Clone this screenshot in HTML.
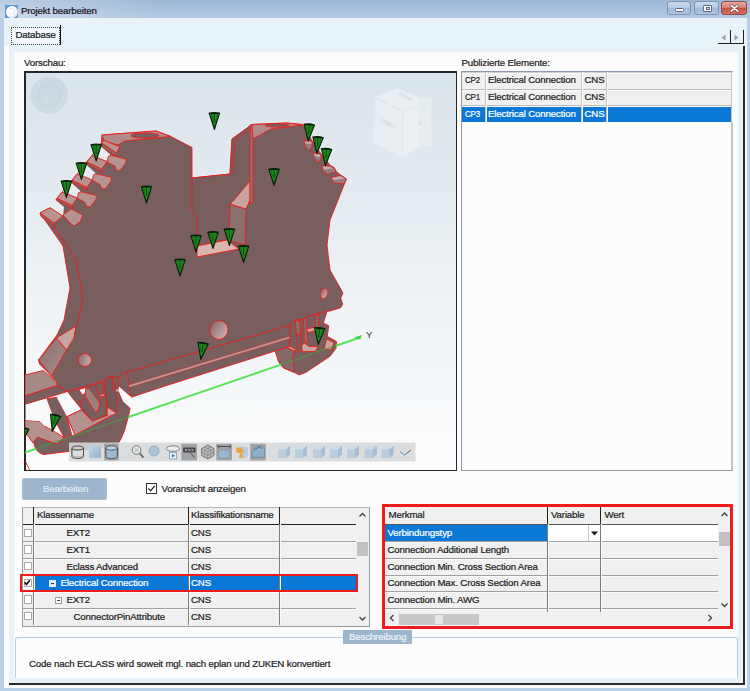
<!DOCTYPE html>
<html lang="de">
<head>
<meta charset="utf-8">
<title>Projekt bearbeiten</title>
<style>
*{box-sizing:border-box;margin:0;padding:0}
html,body{width:750px;height:691px;overflow:hidden;background:#bfd4ea}
body{font-family:"Liberation Sans",sans-serif;font-size:9.7px;letter-spacing:-0.16px;color:#1c1c1c;position:relative;-webkit-text-stroke:0.22px currentColor}
.a{position:absolute}
.t{position:absolute;white-space:nowrap;line-height:12px;height:12px}
#frame{left:0;top:0;width:750px;height:691px;background:linear-gradient(180deg,#9cb6d5 0,#b3c9e3 18px,#bad0e9 19px,#bad0e9 100%)}
#tl{left:0;top:0;width:170px;height:18px;background:linear-gradient(90deg,rgba(255,255,255,.3) 0,rgba(255,255,255,.22) 60px,rgba(255,255,255,0) 170px)}
#client{left:4px;top:18px;width:743px;height:670.3px;background:#e8f2f9}
#cw{left:4px;top:46px;width:743px;height:642.3px;background:#fcfcfc}
#tp{left:9px;top:46px;width:735px;height:637.5px;background:#e7f1f8}
#panel{left:14px;top:52px;width:724px;height:626px;background:#fcfcfc}
.wb{position:absolute;top:1px;height:14px;border:1px solid #7d93b0;border-radius:3px;background:linear-gradient(180deg,#cbd9eb 0,#b9cce4 45%,#9fb9d8 50%,#b0c6e0 100%)}
.grid{position:absolute;background:#f0f0f0}
.hl{position:absolute;height:1px;background:#a0a0a0;box-shadow:0 1px 0 #fbfbfb}
.vl{position:absolute;width:1px;background:#7d7d7d;box-shadow:1px 0 0 #fbfbfb}
.cb{position:absolute;width:8.4px;height:8.4px;border:1px solid #a9a9a9;background:#fff}
</style>
</head>
<body>
<div id="frame" class="a"></div>
<div id="tl" class="a"></div>
<div id="client" class="a"></div>
<div id="cw" class="a"></div>
<div id="tp" class="a"></div>
<div id="panel" class="a"></div>
<div class="a" style="left:5px;top:5px;width:13px;height:13px;background:#5e9bd3"></div>
<div class="a" style="left:5.5px;top:5.5px;width:12px;height:12px;border-radius:50%;background:#fdfeff;box-shadow:inset -1px -1px 1px #c9d9ea"></div>
<div class="a" style="left:8px;top:8px;width:7px;height:7px;border-radius:50%;border:1px solid #dfe8f2;border-left-color:transparent"></div>
<span class="t" style="left:21px;top:5.3px;color:#15151d">Projekt bearbeiten</span>
<div class="wb" style="left:667px;width:24px"><div class="a" style="left:7px;top:6px;width:9px;height:4px;border:1px solid #5a6a85;border-radius:1.5px;background:#fff"></div></div>
<div class="wb" style="left:694px;width:25px"><div class="a" style="left:8px;top:2.5px;width:9px;height:7px;border:1px solid #5a6a85;border-radius:1px;background:#fff"></div><div class="a" style="left:10.5px;top:4.5px;width:4px;height:3px;border:1px solid #5a6a85;background:#c8d6e8"></div></div>
<div class="wb" style="left:721px;width:26px;border-color:#8a4a4a;background:linear-gradient(180deg,#e6a9a0 0,#d98377 45%,#c5503f 50%,#d2705f 100%)"><svg class="a" style="left:8px;top:2px" width="9" height="8.5" viewBox="0 0 11 10"><path d="M1.5 1.5 L9.5 8.5 M9.5 1.5 L1.5 8.5" stroke="#6b3a3a" stroke-width="3.4" stroke-linecap="round"/><path d="M1.5 1.5 L9.5 8.5 M9.5 1.5 L1.5 8.5" stroke="#fff" stroke-width="2" stroke-linecap="round"/></svg></div>

<div class="a" style="left:11px;top:27px;width:49px;height:18px;background:#f3f8fc;border:1px dotted #444"></div>
<div class="a" style="left:60px;top:25px;width:1px;height:20px;background:#111"></div>
<span class="t" style="left:15.5px;top:29.1px">Database</span>
<div class="a" style="left:9px;top:683.4px;width:736px;height:1.5px;background:#2a2a2a"></div>
<div class="a" style="left:743.4px;top:46px;width:1.4px;height:638.5px;background:#2a2a2a"></div>
<div class="a" style="left:718px;top:30px;width:13px;height:14px;border-right:1px solid #222;border-bottom:1px solid #222"></div>
<div class="a" style="left:731px;top:30px;width:13px;height:14px;border-right:1px solid #222;border-bottom:1px solid #222"></div>
<svg class="a" style="left:718px;top:30px" width="26" height="14" viewBox="0 0 26 14"><path d="M7.5 4.5 L7.5 10.5 L3.5 7.5Z M16.5 4.5 L16.5 10.5 L20.5 7.5Z" fill="#a0a0a0"/></svg>

<span class="t" style="left:24px;top:57.1px">Vorschau:</span>
<div class="a" style="left:24px;top:71px;width:433.4px;height:400px;border-style:solid;border-color:#262626;border-width:2px 1.4px 1.4px 2px;background:linear-gradient(180deg,#dae4eb 0,#e3ebf0 30%,#f0f4f7 60%,#fbfcfd 100%)"></div>
<svg class="a" style="left:25px;top:72px" width="432" height="398" viewBox="25 72 432 398">
<defs>
<linearGradient id="gs" x1="0" y1="0" x2="1" y2="1"><stop offset="0" stop-color="#8a716e"/><stop offset="1" stop-color="#a88c88"/></linearGradient>
<linearGradient id="gh" x1="0" y1="0" x2="1" y2="0.3"><stop offset="0" stop-color="#86696a"/><stop offset="1" stop-color="#c6a7a3"/></linearGradient>
<g id="cone"><path d="M-5.9 -0.2 Q0 -1.8 5.9 -0.2 L0.4 17 L-0.4 17Z" fill="#071c07"/><path d="M-4.4 1 L4.4 1 L0 14Z" fill="#1f8f1f"/><path d="M-4.4 1 L-2.2 1 L0 14Z M4.4 1 L2.6 1 L0 14Z" fill="#167016"/><path d="M0 1 L0 9.5" stroke="#0b3a0b" stroke-width=".9"/></g>
</defs>
<!-- nav circle -->
<circle cx="49.3" cy="95.2" r="18.6" fill="#cdd7df" opacity=".85"/>
<circle cx="49.3" cy="95.2" r="11" fill="none" stroke="#c6d0d9" stroke-width="1.5" opacity=".6"/>
<!-- view cube -->
<g opacity=".6">
<path d="M419.2 97.2 L431.5 97.2 L431.5 145.2 L419.2 147.1Z" fill="#ecf0f2"/>
<path d="M374.8 96.5 L398 88.8 L419.2 97 L419.2 106.5 L403.2 111.4Z" fill="#f1f4f5"/>
<path d="M374.8 97.2 L403.2 111.4 L402.5 156.9 L373.6 142.8Z" fill="#eff2f4"/>
<path d="M403.2 111.4 L419.2 106.5 L419.2 147.1 L402.5 156.9Z" fill="#f4f6f7"/>
<path d="M403.2 111.4 L402.5 156.9 M375.5 97.5 L403.2 111.4 L419 106.5" fill="none" stroke="#cfd6db" stroke-width=".6" stroke-dasharray="2 1"/>
<text x="379" y="121" font-size="6.5" fill="#c3cad0" font-family="Liberation Sans, sans-serif" transform="rotate(27 379 121)">Unten</text>
<text x="398" y="95" font-size="5.5" fill="#c3cad0" font-family="Liberation Sans, sans-serif" transform="rotate(27 398 95)">Hinten</text>
<text x="418" y="125" font-size="6" fill="#c3cad0" font-family="Liberation Sans, sans-serif">9</text>
</g>
<g stroke="#ec1c1c" stroke-width=".9" stroke-linejoin="round">
<!-- lower-left arm -->
<path d="M25 375 L43 370.5 L57 382 L57.5 385.5 L25 396Z" fill="#a58985"/>
<path d="M25 396 L57.5 385.5 L67.5 391.5 L25 404.5Z" fill="#785f5d"/>
<!-- post 0 -->
<path d="M46.7 398.7 L56.7 397.3 L66.7 416 L72 436 L64 437.3 L53.3 417.3Z" fill="#785f5d"/>
<!-- foot top face -->
<path d="M25 420 L40 421.5 L44.5 426 L54.5 431.5 L64 437.5 L57 444 L37.5 437.5 L33 443 L25 432Z" fill="#b5918d"/>
<!-- foot front -->
<path d="M37.5 437.5 Q32 441 35 447 Q38 454 44 454.5 L117 445.5 L121 438.9 L124.2 431.4 L128.5 416.4 L130.1 407.8 L123.2 401.4 L118.4 390.7 L118.4 376.8 L112.5 376.8 L111.4 375.7 L107.1 377.3 L102.8 381.6 L67.5 391.5 L81.4 410 L67 416.4 L75 435.1 L64 437.5 L57 444Z" fill="#785f5d"/>
<!-- inner pink floor -->
<path d="M67 416.4 L81.4 410 L92.1 420.7 L107.6 415.3 L107.6 407.3 L116.2 413.2 L75 435.1Z" fill="#b5918d"/>
<path d="M107.6 415.3 L107.6 407.3 L116.2 413.2Z" fill="#cfaaa6" stroke="none"/>
<!-- post 1 / gap b -->
<path d="M78.7 389.6 L85.7 387.5 L86.8 392.3 L82.5 395Z" fill="#f7f9fa"/>
<!-- right wall -->
<path d="M103.9 382.1 L107.1 377.3 L111.4 375.7 L113 389.6 L116.7 391.8 L116.7 413.2 L107.6 407.3 L106 396Z" fill="#715a58"/>
<!-- U clip -->
<path d="M85.7 388.6 L88.9 388 L99.6 402.5 L99.1 410 L95.3 412.1 L85.2 396Z" fill="#9a807c"/>
<path d="M83.5 397.5 L85.7 396.3 L96 411.5 L94 412.5Z" fill="#c8a4a0" stroke="none"/>
<path d="M98.5 395 L103.9 393.4 L106 396 L100.2 397.1Z" fill="#b5918d"/>
<path d="M79.8 405.1 L85.2 396 L95.3 412.1 L99.1 410 L100.2 397.1 L106 396 L107.1 414.8 L92.1 421.2Z" fill="#785f5d"/>
<path d="M95.3 384.3 L98.5 395 M102.3 382.1 L103.9 393.4 M77.5 402 L81 401" fill="none"/>
<!-- main body silhouette -->
<path d="M102 135 L156 131 L170 136 L192 147.5 L192 178 L230 174 L232 139 L252 124.5 L287 123 L302.7 124.4 L312.1 140.9 L321 154 L330.5 165.8 L334.2 167.7 L336.1 171.4 L340.8 175.2 L346.4 179 L338 200 L330 220 L327 245 L330 270 L343 293 L340.7 298 L342.7 304 L340.7 307.7 L330 311 L324.7 311.7 L306 317 L303.3 319.7 L295.3 320.3 L290 325 L290 346.3 L275.3 351 L250 359 L165 386 L131.7 397.1 L128.5 395 L118.9 386.4 L118.4 390.7 L115.7 389.6 L112.5 376.8 L111.4 375.7 L107.1 377.3 L102.8 381.6 L67.5 391.5 L57.5 385.5 L57 382 L51.5 376 L39.5 364 L38.5 360 L57 335 L64 320 L70 288 L63 246 L40 213 L50 207.6 L57 198.3 L62.2 191.9 L72 180.3 L77.2 173.9 L86.8 161.9 L92 155.5 L101.4 142.7Z" fill="#785f5d"/>
<!-- left side face -->
<path d="M56.5 338 L66.5 350 L51.5 376 L38.5 360Z" fill="url(#gs)"/>
<path d="M56.5 338 L76 326 L74 338 L66.5 350Z" fill="#c8a4a0"/>
<!-- front face left edge line -->
<path d="M54 226 L76 260 L83 298 L76 328 L74 338" fill="none"/>
<!-- top face of left block -->
<path d="M102 135 L156 131 L170 136.5 L125 141 L118 145 L104 141Z" fill="#b08b87"/>
<ellipse cx="145" cy="135.5" rx="14" ry="2.6" fill="#785f5d"/>
<!-- teeth -->
<path d="M101.4 142.7 L116.4 153 L117 157 L102 147Z" fill="#866b68"/>
<path d="M101.4 142.7 L104.2 140.3 L119.7 146.9 L116.4 153Z" fill="#b8928e"/>
<path d="M46 207 L55 199.5 L64 207 L63 216Z" fill="#e6ecf0" stroke="none"/>
<path d="M92.0 155.5 L101.4 146.7 L110.3 154.6 L107.0 161.5Z" fill="#e6ecf0" stroke="none"/>
<path d="M77.2 173.9 L86.6 165.1 L95.5 173.0 L92.2 179.9Z" fill="#e6ecf0" stroke="none"/>
<path d="M62.2 191.9 L71.6 183.1 L80.5 191.0 L77.2 197.9Z" fill="#e6ecf0" stroke="none"/>
<path d="M108.4 156.3 L111.2 155.4 L126.3 159.1 L125.8 162.9 L120.2 170.4 L116.4 170.4 L115.0 166.2 L107.0 161.9Z" fill="#b8928e"/>
<path d="M86.8 161.9 L101.8 169.0 L102.8 172.0 L87.6 164.6Z" fill="#866b68"/>
<path d="M86.8 161.9 L92.0 155.5 L107.0 161.5 L101.8 169.0Z" fill="#b8928e"/>
<path d="M93.6 174.7 L96.4 173.8 L111.5 177.5 L111.0 181.3 L105.4 188.8 L101.6 188.8 L100.2 184.6 L92.2 180.3Z" fill="#b8928e"/>
<path d="M72.0 180.3 L87.0 187.4 L88.0 190.4 L72.8 183.0Z" fill="#866b68"/>
<path d="M72.0 180.3 L77.2 173.9 L92.2 179.9 L87.0 187.4Z" fill="#b8928e"/>
<path d="M78.6 192.7 L81.4 191.8 L96.5 195.5 L96.0 199.3 L90.4 206.8 L86.6 206.8 L85.2 202.6 L77.2 198.3Z" fill="#b8928e"/>
<path d="M57.0 198.3 L72.0 205.4 L73.0 208.4 L57.8 201.0Z" fill="#866b68"/>
<path d="M57.0 198.3 L62.2 191.9 L77.2 197.9 L72.0 205.4Z" fill="#b8928e"/>
<path d="M63 215 L71 209 L83 215 L80 222 L74 226 L70 223Z" fill="#b8928e"/>
<path d="M40 213 L54 223 L54.5 226 L41 216.5Z" fill="#866b68"/>
<path d="M40 213 L50 207.6 L63 216 L54 223Z" fill="#b8928e"/>

<!-- slot inner -->
<path d="M232 139 L252 124.5 L253 142 L250 203 L241 203 L230 204 L229 240 L227 240 L197 246 L197 217 L192 212 L192 178 L230 174Z" fill="#785f5d"/>
<path d="M197 246 L227 240 L239 249 L197 257Z" fill="#dcb4b0"/>
<path d="M230 204 L246 209 L245 245 L229 240Z" fill="#8a706d"/>
<path d="M230 204 L234 200 L250 181 L250 200 L246 209Z" fill="#c8a4a0"/>
<path d="M250 125 L253 125 L253 203 L250 203Z" fill="#96716e"/>
<path d="M233 174 L235 140.6 L253 127.4" fill="none" stroke-width=".7"/>
<!-- right tower top face -->
<path d="M252 124.5 L287 123 L303 125 L271 129 L253 139Z" fill="#b08b87"/>
<ellipse cx="277" cy="125.3" rx="12" ry="1.8" fill="#785f5d"/>
<!-- right teeth -->
<path d="M303.6 140.4 L312.1 140.9 L312.1 147 L308.8 150.7 L305 146Z M313 152.6 L321 154 L321 159.2 L317.8 162.5 L314 157.8Z M321.5 165.3 L330.5 165.8 L334.2 167.7 L336.1 171.4 L327.6 174.7 L322.9 170.5Z M330.5 177.1 L340.8 175.2 L346.4 179 L344 184 L334 183Z" fill="#8f7d7b"/>
<path d="M304.5 141.5 L311.5 142 L311.3 144 L305.3 143.5Z M314 153.8 L320.3 155 L320.1 157 L314.6 156Z M322.5 166.5 L330 167 L333 168.5 L324 169.5Z M332 178 L340.5 176.3 L344 178.7 L334 180Z" fill="#c9aeab" stroke="none"/>
<!-- rail -->
<path d="M112.5 376.8 L118.4 376.8 L120 376.2 L122.1 373 L127.5 372 L250 337 L290 325 M127.5 372 L128.5 384.3 L131.7 397.1 M118.4 376.8 L118.4 390.7" fill="none"/>
<path d="M115.7 389.6 L120 389 L120.5 391.2 L116.2 391.8Z" fill="#c8a4a0" stroke="none"/>
<path d="M128.6 385 L291 335.8 L291 338.2 L129 387.6Z" fill="#b39c99" stroke-width=".5"/>
<!-- holes -->
<ellipse cx="84.7" cy="360" rx="6.6" ry="6.4" fill="url(#gh)"/>
<ellipse cx="219" cy="330" rx="9" ry="9.5" fill="url(#gh)" transform="rotate(20 219 330)"/>
<ellipse cx="324" cy="293.5" rx="3.6" ry="5.6" fill="url(#gh)" transform="rotate(20 324 293.5)"/>
<!-- right small foot -->
<path d="M275.3 351 L290 346.3 L290 325 L295.3 320.3 L303.3 319.7 L306 317 L324.7 311.7 L326.7 312.3 L323.3 323 L328.7 325.7 L327.3 336.3 L336.7 341.7 L336 348.3 L330 356.3 L306 372.3 L299.3 375 L294 372.3 L283.3 367.7 L278.7 361.7Z" fill="#785f5d"/>
<path d="M275.3 351 L287.5 347.5 L294 351 L292.7 357.7 L294 372.3 L283.3 367.7 L278.7 361.7Z" fill="#846a67"/>
<path d="M287.5 347.5 L290 346.3 L296 349.5 L294 351Z" fill="#c8a4a0"/>
<path d="M301.5 345.5 L304.5 343 L308.7 346.3 L318 346.5 L315.5 351.5 L302 351.7Z" fill="#c8a4a0"/>
<path d="M295.3 320.3 L299.5 321.5 L300.7 333.5 L296.5 335Z M303.3 319.7 L306 317 L308 343 L304.5 343Z M316 314.5 L319 313.5 L318 327 L315.5 328Z" fill="#8a706d"/>
<path d="M296.5 335 L300.7 333.5 L302 351.7 L298 352Z" fill="#785f5d"/>
<path d="M306.5 329 L315.5 327 L318 330 L308 332.5Z M324 349 L326.5 339 L334 342.5 L331 350Z" fill="#c8a4a0"/>
</g>
<!-- white gaps -->
<path d="M25.5 404.7 L46.5 398.7 L53.3 417.3 L44.7 426 L40 421.3 L25.5 420Z" fill="#f7f9fa"/>
<path d="M56.7 397.3 L67.3 392.7 L80.7 408.7 L66.7 416Z" fill="#f7f9fa"/>
<path d="M118.9 386.4 L128.5 395 L131.2 397.1 L130.1 407.8 L123.2 401.4 L118.6 390.7Z" fill="#f7f9fa"/>
<path d="M25.3 461.3 L30 470.7" stroke="#ec1c1c" stroke-width=".9" fill="none"/>
<!-- green axis -->
<path d="M25 452.5 L36 448.7 M128.5 417 L281 364.6 M336 345.7 L360 337.5" stroke="#5ae25a" stroke-width="2" fill="none"/>
<path d="M36 448.7 L128.5 417 M281 364.6 L336 345.7" stroke="#4c9a42" stroke-width="1.3" fill="none" opacity=".75"/>
<path d="M354 337.5 L362 335 L360 339.5Z" fill="#3fd03f"/>
<text x="366" y="338" font-size="9.5" fill="#333" style="-webkit-text-stroke:0" font-family="Liberation Sans, sans-serif">Y</text>
<!-- cones -->
<use href="#cone" x="96.2" y="144.5"/><use href="#cone" x="81.4" y="163"/><use href="#cone" x="66.4" y="181"/>
<use href="#cone" x="214.4" y="113"/><use href="#cone" x="274" y="169"/><use href="#cone" x="308.8" y="124.4" transform="rotate(4 308.8 132)"/><use href="#cone" x="317.5" y="137.1" transform="rotate(4 317.5 145)"/><use href="#cone" x="326" y="148.9" transform="rotate(4 326 157)"/>
<use href="#cone" x="146.5" y="186.5"/>
<use href="#cone" x="196" y="235.5"/><use href="#cone" x="213" y="232"/><use href="#cone" x="229.4" y="229"/><use href="#cone" x="243.6" y="246"/><use href="#cone" x="180" y="259.5"/>
<use href="#cone" x="202" y="343" transform="rotate(8 202 351)"/>
<use href="#cone" x="319" y="328" transform="rotate(5 319 336)"/>
<use href="#cone" x="54" y="415" transform="rotate(12 54 423)"/>
<use href="#cone" x="22.5" y="428" transform="rotate(10 22.5 436)"/>

</svg>
<svg class="a" style="left:69px;top:442px" width="347" height="20" viewBox="69 442 347 20">
<defs>
<linearGradient id="gb" x1="0" y1="0" x2="1" y2="1"><stop offset="0" stop-color="#c3d6e6"/><stop offset="1" stop-color="#92b2cd"/></linearGradient>
<g id="cube"><path d="M-6 -2.5 L-2 -6 L6 -6 L6 2.5 L2 6 L-6 6Z" fill="#b9cddd"/><path d="M-6 -2.5 L-2 -6 L6 -6 L2 -2.5Z" fill="#cfdde8"/><path d="M2 -2.5 L6 -6 L6 2.5 L2 6Z" fill="#a6bfd3"/></g>
</defs>
<rect x="69" y="442.5" width="346.5" height="19" fill="#d6d8d9" opacity=".88"/>
<rect x="104.2" y="443.8" width="14.6" height="16.6" fill="#a2a3a4"/>
<rect x="181.4" y="443.8" width="15.6" height="16.6" fill="#a2a3a4"/>
<rect x="216.3" y="443.8" width="15.6" height="16.6" fill="#a2a3a4"/>
<rect x="250.2" y="443.8" width="15.6" height="16.6" fill="#a2a3a4"/>
<!-- cylinder outline -->
<g fill="none" stroke="#4a4a4a" stroke-width="1"><ellipse cx="77.7" cy="448" rx="5.8" ry="2"/><path d="M71.9 448 L71.9 456.5 A5.8 2 0 0 0 83.5 456.5 L83.5 448"/><path d="M71.9 455 A5.8 2 0 0 0 83.5 455" stroke="#8a8a8a" stroke-width=".7"/></g>
<!-- blue square -->
<rect x="89" y="446" width="12" height="12" fill="url(#gb)"/>
<!-- filled cylinder -->
<path d="M105.8 448 L105.8 456.5 A5.8 2.2 0 0 0 117.4 456.5 L117.4 448Z" fill="#9fb9cf" stroke="#4a4a4a" stroke-width=".9"/><ellipse cx="111.6" cy="448" rx="5.8" ry="2.2" fill="#bcd0e0" stroke="#4a4a4a" stroke-width=".9"/>
<!-- magnifier -->
<circle cx="136.5" cy="450" r="4.3" fill="#e4e8ea" stroke="#777" stroke-width="1"/><path d="M139.8 453.3 L143.4 457.6" stroke="#666" stroke-width="1.8"/><path d="M134.5 448 L138.5 452 M138.5 448 L134.5 452" stroke="#999" stroke-width=".7"/>
<!-- circle -->
<rect x="153" y="449" width="9" height="8" fill="#d3dfe9"/><circle cx="154" cy="451" r="5" fill="#a9c3d9" stroke="#8aa6bf" stroke-width=".8"/>
<!-- rotate -->
<ellipse cx="173" cy="448.6" rx="6.6" ry="2.8" fill="#e9ecee" stroke="#666" stroke-width=".8"/><rect x="169.5" y="452.5" width="7" height="6.5" fill="#e9f0f6" stroke="#7f9cb8" stroke-width=".8"/><path d="M172 454 L175 455.8 L172 457.5Z" fill="#3b6ea5"/>
<!-- tag -->
<rect x="183" y="447.5" width="12.5" height="5" rx="1" fill="#4a4a4a"/><path d="M185 450 L193.5 450" stroke="#e8e8e8" stroke-width="1" stroke-dasharray="2 1.2"/><path d="M190 452.5 L194.5 457.5" stroke="#4a4a4a" stroke-width="1"/>
<!-- mesh -->
<path d="M207.8 445 L214 448.5 L214 455.5 L207.8 459 L201.6 455.5 L201.6 448.5Z" fill="#bdbdbd" stroke="#5f5f5f" stroke-width=".8"/><path d="M201.6 448.5 L207.8 452 L214 448.5 M207.8 452 L207.8 459 M204.7 446.8 L210.9 450.3 M210.9 446.8 L204.7 450.3 M201.6 452 L207.8 455.5 L214 452 M204.7 450.3 L204.7 457.2 M210.9 450.3 L210.9 457.2" stroke="#6a6a6a" stroke-width=".55" fill="none"/>
<!-- dim -->
<path d="M218 446.5 L230.2 446.5 M218 445 L218 448.5 M230.2 445 L230.2 448.5" stroke="#444" stroke-width=".9"/><path d="M218.5 451 L223 449.5 L230 451 L230 457 Q224 460 218.5 457Z" fill="#9bb7cf" stroke="#6e8eab" stroke-width=".6"/>
<!-- orange -->
<path d="M240 446.5 L247.8 447.5 L247.8 456.5 L240 458.5Z" fill="#b5cde0"/><path d="M236.2 447.5 L241 447.5 L244.5 452 L241 453 L244 458 L238.5 457.5 L240.5 453.5 L236.2 452.5Z" fill="#e9a53c"/>
<!-- folder-ish -->
<path d="M252 450.5 L256 447 L262 446 L264.5 449 L264.5 457 L252 457.5Z" fill="#8fb0cb" stroke="#5d7e9c" stroke-width=".6"/><path d="M254 450 L260 446.8 L262 449" stroke="#3f5d7a" stroke-width=".7" fill="none"/>
<use href="#cube" x="284" y="452"/><use href="#cube" x="301" y="452"/><use href="#cube" x="319" y="452"/><use href="#cube" x="336" y="452"/><use href="#cube" x="353" y="452"/><use href="#cube" x="370.7" y="452"/><use href="#cube" x="387.5" y="452"/>
<path d="M400 451.5 L404.5 455 " stroke="#7a8ea3" stroke-width="1"/><path d="M404.5 455 L411 450" stroke="#3f7fc0" stroke-width="1"/><path d="M408 452 L411 450" stroke="#d07060" stroke-width="1"/>
</svg>


<span class="t" style="left:461.5px;top:57.1px">Publizierte Elemente:</span>
<div class="a" style="left:461px;top:71px;width:272px;height:400px;border:1px solid #8d99a8;border-right:2px solid #c4c4c4;border-bottom-color:#9a9a9a;background:#fcfcfc"></div>
<div class="a" style="left:462px;top:72px;width:270px;height:50px;background:#f0f0f0"></div>
<div class="a" style="left:462px;top:106.2px;width:270px;height:16.2px;background:#0b78d7"></div>
<div class="hl" style="left:462px;top:88.5px;width:270px;background:#bdbdbd"></div>
<div class="hl" style="left:462px;top:105px;width:270px;background:#bdbdbd"></div>
<div class="hl" style="left:462px;top:72px;width:270px;background:#cfcfcf"></div>
<div class="vl" style="left:484.5px;top:72px;height:50px;background:#c4c4c4"></div>
<div class="vl" style="left:581px;top:72px;height:50px;background:#c4c4c4"></div>
<div class="vl" style="left:606px;top:72px;height:50px;background:#c4c4c4"></div>
<div class="vl" style="left:731px;top:72px;height:50px;background:#c4c4c4"></div>
<span class="t" style="left:464.8px;top:74.4px;transform:scaleX(.82);transform-origin:0 0">CP2</span><span class="t" style="left:488px;top:74.4px">Electrical Connection</span><span class="t" style="left:584.5px;top:74.4px">CNS</span>
<span class="t" style="left:464.8px;top:91.1px;transform:scaleX(.82);transform-origin:0 0">CP1</span><span class="t" style="left:488px;top:91.1px">Electrical Connection</span><span class="t" style="left:584.5px;top:91.1px">CNS</span>
<span class="t" style="left:464.8px;top:107.8px;color:#fff;transform:scaleX(.82);transform-origin:0 0">CP3</span><span class="t" style="left:488px;top:107.8px;color:#fff">Electrical Connection</span><span class="t" style="left:584.5px;top:107.8px;color:#fff">CNS</span>

<div class="a" style="left:22px;top:477.5px;width:85px;height:22px;border-radius:2px;background:#9db6cd;border:1px solid #a9bfd4"></div>
<span class="t" style="left:43px;top:483px;color:#e1eaf2">Bearbeiten</span>
<div class="a" style="left:146px;top:483px;width:11px;height:11px;border:1px solid #333;background:#fff"></div>
<svg class="a" style="left:146px;top:483px" width="11" height="11" viewBox="0 0 11 11"><path d="M2.5 5.5 L4.6 7.8 L8.6 3" stroke="#222" stroke-width="1.2" fill="none"/></svg>
<span class="t" style="left:161.5px;top:483px">Voransicht anzeigen</span>

<div class="a" style="left:22px;top:506.5px;width:348px;height:120px;background:#f0f0f0;border:1px solid #9a9a9a;border-top-color:#b5b5b5"></div>
<!-- header -->
<div class="a" style="left:33px;top:507px;width:1px;height:17px;background:#222"></div>
<div class="a" style="left:187.5px;top:507px;width:1px;height:17px;background:#222"></div>
<div class="a" style="left:279px;top:507px;width:1px;height:17px;background:#222"></div>
<div class="a" style="left:23px;top:523.5px;width:333px;height:1px;background:#222"></div>
<span class="t" style="left:37px;top:509.3px">Klassenname</span>
<span class="t" style="left:191px;top:509.3px">Klassifikationsname</span>
<!-- selected row -->
<div class="a" style="left:34px;top:575px;width:322px;height:16.5px;background:#0b78d7"></div>
<div class="a" style="left:22.5px;top:575px;width:11px;height:16.5px;background:#fafafa"></div>
<!-- row lines -->
<div class="hl" style="left:23px;top:541px;width:333px"></div>
<div class="hl" style="left:23px;top:557.7px;width:333px"></div>
<div class="hl" style="left:23px;top:574.4px;width:333px"></div>
<div class="hl" style="left:23px;top:591.1px;width:333px"></div>
<div class="hl" style="left:23px;top:607.8px;width:333px"></div>
<div class="vl" style="left:33px;top:524px;height:101px"></div>
<div class="vl" style="left:187.5px;top:524px;height:101px"></div>
<div class="vl" style="left:279px;top:524px;height:101px"></div>
<!-- checkboxes -->
<div class="cb" style="left:23.6px;top:528.5px"></div>
<div class="cb" style="left:23.6px;top:545.2px"></div>
<div class="cb" style="left:23.6px;top:561.9px"></div>
<div class="cb" style="left:23.6px;top:578.6px;border-color:#b0b0b0"></div>
<div class="cb" style="left:23.6px;top:595.3px"></div>
<div class="cb" style="left:23.6px;top:612px"></div>
<svg class="a" style="left:23.3px;top:578.4px" width="9" height="9" viewBox="0 0 10 10"><path d="M1.8 4.8 L3.8 7.2 L7.6 2.4" stroke="#111" stroke-width="1.9" fill="none"/></svg>
<!-- texts -->
<span class="t" style="left:66.5px;top:527.1px">EXT2</span><span class="t" style="left:191px;top:527.1px">CNS</span>
<span class="t" style="left:66.5px;top:543.8px">EXT1</span><span class="t" style="left:191px;top:543.8px">CNS</span>
<span class="t" style="left:66.5px;top:560.5px">Eclass Advanced</span><span class="t" style="left:191px;top:560.5px">CNS</span>
<span class="t" style="left:60.5px;top:577.2px;color:#fff">Electrical Connection</span><span class="t" style="left:191px;top:577.2px;color:#fff">CNS</span>
<span class="t" style="left:66.5px;top:593.9px">EXT2</span><span class="t" style="left:191px;top:593.9px">CNS</span>
<span class="t" style="left:73.5px;top:610.6px">ConnectorPinAttribute</span><span class="t" style="left:191px;top:610.6px">CNS</span>
<!-- expanders -->
<div class="a" style="left:48.5px;top:580px;width:7px;height:7px;border:1px solid #e6eefa;background:#dfe9f6"></div><div class="a" style="left:50.5px;top:583px;width:3px;height:1px;background:#245"></div>
<div class="a" style="left:54.5px;top:596.5px;width:7px;height:7px;border:1px solid #9a9a9a;background:#fafafa"></div><div class="a" style="left:56.5px;top:599.5px;width:3px;height:1px;background:#444"></div>
<!-- scrollbar -->
<div class="a" style="left:356px;top:507.5px;width:13px;height:118px;background:#f0f0f0"></div>
<div class="a" style="left:357px;top:542px;width:11px;height:13.5px;background:#c1c1c1"></div>
<svg class="a" style="left:356px;top:507.5px" width="13" height="118" viewBox="0 0 13 118"><path d="M3.5 8.5 L6.5 5.5 L9.5 8.5 M3.5 109 L6.5 112 L9.5 109" stroke="#404040" stroke-width="1.3" fill="none"/></svg>
<!-- red highlight -->
<div class="a" style="left:20.4px;top:574.3px;width:337.6px;height:18.2px;border:2px solid #ee1c1c"></div>

<div class="a" style="left:384px;top:506px;width:347px;height:119px;background:#f0f0f0"></div>
<!-- header borders -->
<div class="a" style="left:547px;top:507px;width:1px;height:17px;background:#222"></div>
<div class="a" style="left:600px;top:507px;width:1px;height:17px;background:#222"></div>
<div class="a" style="left:385px;top:523.8px;width:333px;height:1px;background:#555"></div>
<span class="t" style="left:388.5px;top:509.3px">Merkmal</span>
<span class="t" style="left:551px;top:509.3px">Variable</span>
<span class="t" style="left:604.5px;top:509.3px">Wert</span>
<!-- first row -->
<div class="a" style="left:385px;top:524.8px;width:162px;height:16.5px;background:#0b78d7"></div>
<div class="a" style="left:548px;top:524.8px;width:52px;height:16.5px;background:#fff"></div>
<div class="a" style="left:601px;top:524.8px;width:117px;height:16.5px;background:#fff"></div>
<div class="a" style="left:588px;top:524.8px;width:1px;height:16.5px;background:#c8c8c8"></div>
<svg class="a" style="left:589px;top:525px" width="11" height="16" viewBox="0 0 11 16"><path d="M2 6.5 L9 6.5 L5.5 10.5Z" fill="#111"/></svg>
<!-- row lines -->
<div class="hl" style="left:385px;top:541.3px;width:333px"></div>
<div class="hl" style="left:385px;top:558px;width:333px"></div>
<div class="hl" style="left:385px;top:574.7px;width:333px"></div>
<div class="hl" style="left:385px;top:591.3px;width:333px"></div>
<div class="hl" style="left:385px;top:608px;width:333px"></div>
<div class="vl" style="left:547px;top:524px;height:88px"></div>
<div class="vl" style="left:600px;top:524px;height:88px"></div>
<span class="t" style="left:387.5px;top:527.2px;color:#fff">Verbindungstyp</span>
<span class="t" style="left:387.5px;top:543.9px">Connection Additional Length</span>
<span class="t" style="left:387.5px;top:560.6px">Connection Min. Cross Section Area</span>
<span class="t" style="left:387.5px;top:577.3px">Connection Max. Cross Section Area</span>
<span class="t" style="left:387.5px;top:594px">Connection Min. AWG</span>
<!-- scrollbars -->
<div class="a" style="left:385px;top:612px;width:346px;height:13px;background:#f0f0f0"></div>
<div class="a" style="left:718px;top:507px;width:13px;height:105px;background:#f0f0f0"></div>
<div class="a" style="left:719px;top:532px;width:11px;height:14px;background:#c1c1c1"></div>
<div class="a" style="left:399px;top:613.5px;width:79.5px;height:11px;background:#c8c8c8"></div>
<div class="a" style="left:435px;top:614.5px;width:8px;height:9px;background:#e6e6e6"></div>
<svg class="a" style="left:385px;top:507px" width="346" height="118" viewBox="0 0 346 118"><path d="M336.5 9 L339.5 6 L342.5 9 M336.5 96.5 L339.5 99.5 L342.5 96.5 M8.5 108 L5.5 111 L8.5 114 M323.5 108 L326.5 111 L323.5 114" stroke="#404040" stroke-width="1.3" fill="none"/></svg>
<!-- red border -->
<div class="a" style="left:382px;top:504px;width:351px;height:124.7px;border:3px solid #ee1c1c"></div>

<div class="a" style="left:14.5px;top:636.5px;width:723.5px;height:41.5px;border:1px solid #b9cde0;border-bottom:none;border-radius:3px 3px 0 0"></div>
<div class="a" style="left:342.7px;top:630px;width:69px;height:14px;background:#9db6cd"></div>
<span class="t" style="left:349px;top:631.3px;color:#edf2f7">Beschreibung</span>
<span class="t" style="left:29px;top:657.6px">Code nach ECLASS wird soweit mgl. nach eplan und ZUKEN konvertiert</span>

</body>
</html>
